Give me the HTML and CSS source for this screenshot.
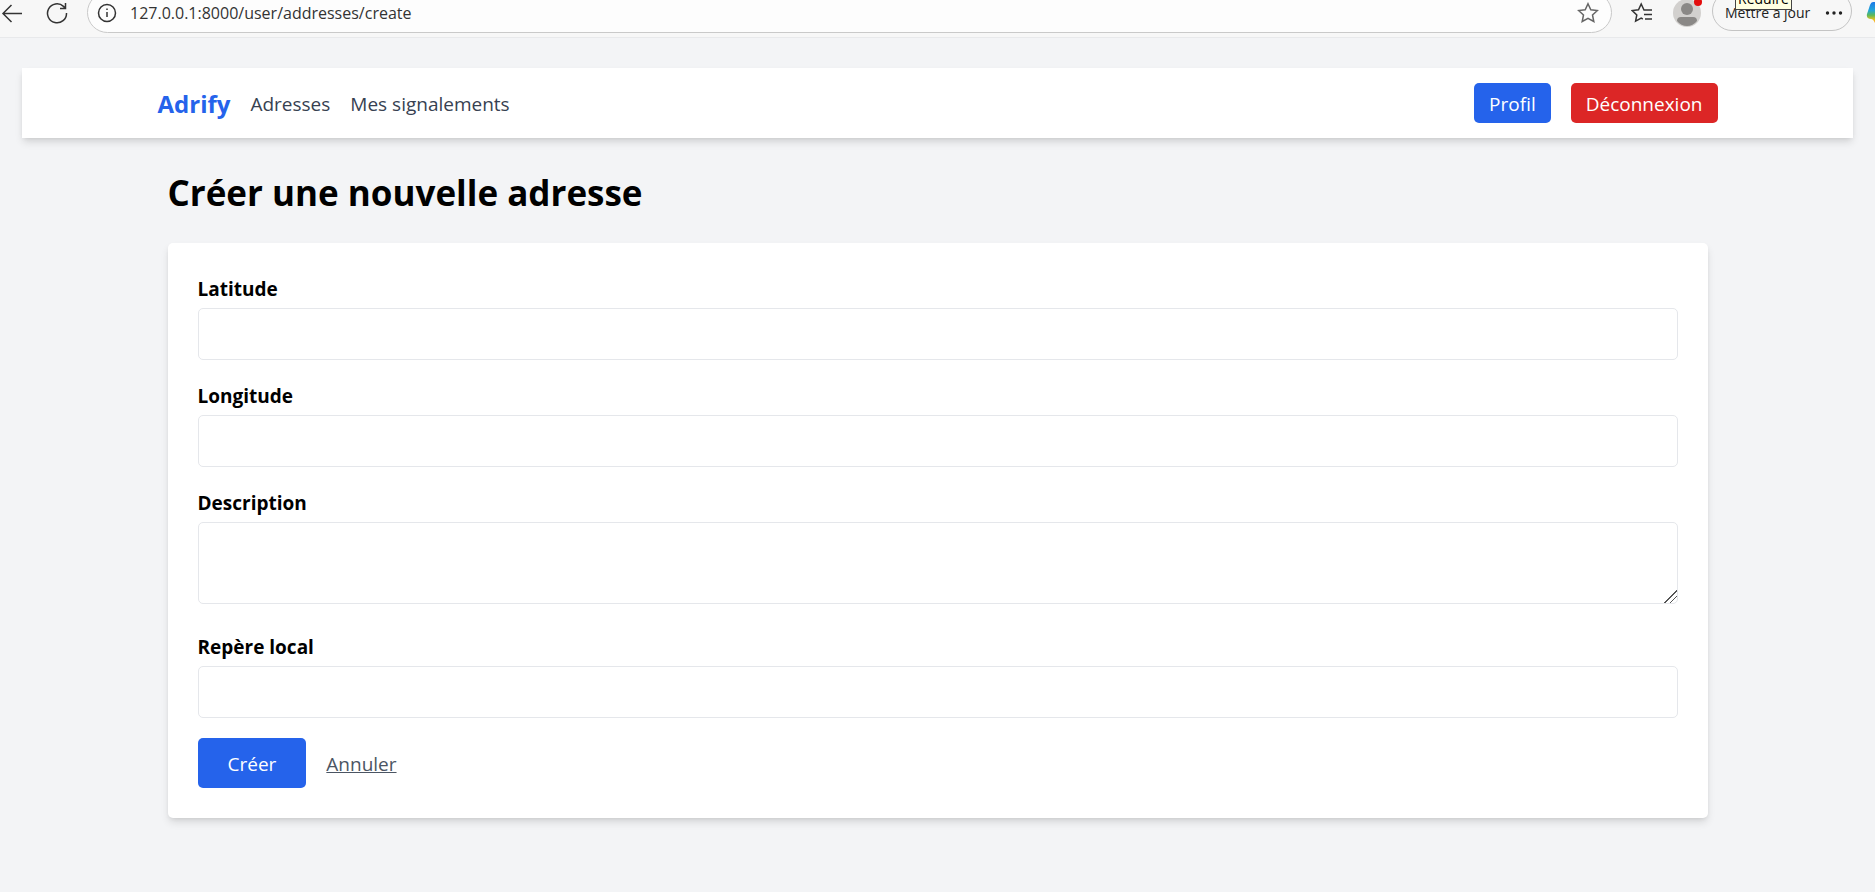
FILE: index.html
```html
<!DOCTYPE html>
<html lang="fr">
<head>
<meta charset="utf-8">
<title>Adrify</title>
<link rel="stylesheet" href="styles.css">
</head>
<body>
<div class="toolbar">
  <button class="tool back" type="button" aria-label="Retour">
    <svg width="22" height="22" viewBox="0 0 22 22"><path d="M21 11.500H2M10.500 3L2 11.500l8.500 8.500"/></svg>
  </button>
  <button class="tool reload" type="button" aria-label="Actualiser">
    <svg width="22" height="22" viewBox="0 0 22 22"><path d="M20.500 11a9.500 9.500 0 1 1-3-6.600l2 2M19.500 1v5.500h-5.500"/></svg>
  </button>
  <div class="address-bar">
    <svg class="info" width="20" height="20" viewBox="0 0 20 20"><circle cx="10" cy="10" r="8.500"/><path d="M10 9v5"/><path d="M10 5.500v1.500"/></svg>
    <input class="url" type="text" aria-label="Adresse" value="127.0.0.1:8000/user/addresses/create">
    <button class="tool" type="button" aria-label="Ajouter aux favoris">
      <svg class="grey" width="22" height="22" viewBox="0 0 22 22"><path d="M11 1.700l2.800 6 6.600.8-4.900 4.500 1.300 6.500-5.800-3.200-5.800 3.200 1.300-6.500-4.900-4.500 6.600-.8z"/></svg>
    </button>
  </div>
  <button class="tool favorites" type="button" aria-label="Favoris">
    <svg width="22" height="22" viewBox="0 0 22 22"><path d="M21 8h-8L10.200 2 7.500 7.700l-6.300.8 4.600 4.500-1.200 6.200 5.600-3 1.600.8M13 12.500h8M14 17h7"/></svg>
  </button>
  <button class="avatar" type="button" aria-label="Profil du navigateur">
    <svg width="28" height="28" viewBox="0 0 28 28"><circle cx="14" cy="14" r="14" fill="#d2d0ce"/><circle cx="14" cy="10" r="6" fill="#8a8886"/><path d="M4 22q0-4 4-4h12q4 0 4 4-4 5-10 5T4 22z" fill="#8a8886"/></svg>
    <span class="badge"></span>
  </button>
  <button class="update" type="button">
    <span>Mettre à jour</span>
    <svg width="18" height="6" viewBox="0 0 18 6"><circle cx="2.500" cy="3" r="1.700"/><circle cx="9" cy="3" r="1.700"/><circle cx="15.500" cy="3" r="1.700"/></svg>
    <span class="tooltip">Réduire</span>
  </button>
  <svg class="copilot" width="28" height="28" viewBox="0 0 28 28">
    <defs><linearGradient id="cp" x1="0" y1="0" x2="0" y2="1"><stop offset="0" stop-color="#1b78e8"/><stop offset=".35" stop-color="#22a6d8"/><stop offset=".55" stop-color="#5cba5a"/><stop offset=".75" stop-color="#f2c21c"/><stop offset="1" stop-color="#f4662d"/></linearGradient></defs>
    <path d="M7 2h15l-6 24H10q-2-7-5-7-5 0-4-5l3-9q1-3 3-3z" fill="url(#cp)"/>
  </svg>
</div>
<div class="page">
  <nav class="navbar">
    <div class="navbar-inner">
      <div class="links">
        <a class="brand" href="#">Adrify</a>
        <a class="link" href="#">Adresses</a>
        <a class="link" href="#">Mes signalements</a>
      </div>
      <div class="links">
        <a class="btn" href="#">Profil</a>
        <button class="btn danger" type="button">Déconnexion</button>
      </div>
    </div>
  </nav>
  <main class="content">
    <h1 class="title">Créer une nouvelle adresse</h1>
    <form class="card">
      <div class="field">
        <label for="latitude">Latitude</label>
        <input class="control" id="latitude" type="text">
      </div>
      <div class="field">
        <label for="longitude">Longitude</label>
        <input class="control" id="longitude" type="text">
      </div>
      <div class="field">
        <label for="description">Description</label>
        <textarea class="control area" id="description" rows="2"></textarea>
      </div>
      <div class="field">
        <label for="repere">Repère local</label>
        <input class="control" id="repere" type="text">
      </div>
      <div class="actions">
        <button class="btn submit" type="submit">Créer</button>
        <a class="cancel" href="#">Annuler</a>
      </div>
    </form>
  </main>
</div>
</body>
</html>
```
FILE: styles.css
```css
* { box-sizing: border-box; }
body {
  margin: 0;
  background: #f3f4f6;
  color: #000;
  font: 19px/30px "Open Sans", "Noto Sans", sans-serif;
}
button, input, textarea { font: inherit; color: inherit; }
button { border: 0; background: none; padding: 0; cursor: pointer; }
a { color: inherit; text-decoration: none; }

.toolbar {
  display: flex;
  align-items: flex-end;
  height: 38px;
  padding-bottom: 4px;
  overflow: hidden;
  background: #f7f7f7;
  border-bottom: 1px solid #e8e9eb;
}
.toolbar svg { display: block; flex: none; fill: none; stroke: #333; stroke-width: 1.5; }
.toolbar .grey { stroke: #666; }
.tool { display: grid; place-items: center; flex: none; width: 22px; height: 40px; }
.back { margin-left: 1px; }
.reload { margin: 0 19px 0 23px; }
.address-bar {
  display: flex;
  align-items: center;
  flex: 1;
  height: 41px;
  padding: 0 12px 0 9px;
  gap: 13px;
  background: #fdfdfd;
  border: 1px solid #c9c9c9;
  border-radius: 21px;
}
.url {
  flex: 1;
  min-width: 0;
  padding: 0;
  border: 0;
  outline: 0;
  background: none;
  font-size: 16px;
  color: #333;
}
.favorites { margin-left: 19px; }
.avatar { position: relative; display: grid; place-items: center; height: 40px; margin: 0 11px 0 20px; }
.avatar svg { stroke: none; }
.badge {
  position: absolute;
  top: 5px;
  right: -1px;
  width: 8px;
  height: 8px;
  border-radius: 50%;
  background: #e30d0d;
}
.update {
  position: relative;
  display: flex;
  align-items: center;
  justify-content: space-between;
  flex: none;
  width: 140px;
  height: 40px;
  margin-bottom: 2px;
  padding: 4px 8px 0 12px;
  border: 1px solid #c4c4c4;
  border-radius: 20px;
  font-size: 14px;
  color: #222;
}
.toolbar .update svg { fill: #222; stroke: none; }
.tooltip {
  position: absolute;
  bottom: 20px;
  left: 22px;
  padding: 0 2px 1px;
  border: 1px solid #444;
  background: #ffffe1;
  color: #000;
  font-size: 14px;
  line-height: 19px;
}
.copilot { margin: 0 -19px 5px 14px; }
.toolbar .copilot { stroke: none; }

.page { padding: 30px 22px; }
.navbar {
  padding: 15px 20px;
  background: #fff;
  box-shadow: 0 5px 8px -1px rgba(0,0,0,.12), 0 2px 5px -2px rgba(0,0,0,.1);
}
.navbar-inner {
  display: flex;
  align-items: center;
  justify-content: space-between;
  max-width: 1560px;
  margin: 0 auto;
}
.links { display: flex; align-items: center; gap: 20px; }
.brand { padding-top: 2px; font-size: 24px; font-weight: 700; color: #2563eb; }
.link { padding-top: 2px; color: #374151; }
.btn {
  padding: 6px 15px 4px;
  border-radius: 5px;
  background: #2563eb;
  color: #fff;
}
.danger { background: #dc2626; }

.content { max-width: 1540px; margin: 30px auto 0; }
.title { margin: 0; padding: 2px 0 28px; font-size: 35px; line-height: 45px; font-weight: 700; }
.card {
  display: grid;
  gap: 20px;
  padding: 30px;
  border-radius: 5px;
  background: #fff;
  box-shadow: 0 5px 8px -1px rgba(0,0,0,.12), 0 2px 5px -2px rgba(0,0,0,.1);
}
.field { display: grid; gap: 4px; }
.field label { padding-top: 1px; font-weight: 700; }
.control {
  width: 100%;
  height: 52px;
  padding: 10px;
  border: 1px solid #e5e7eb;
  border-radius: 5px;
  background: #fff;
}
.area { display: block; height: 82px; margin-bottom: 7px; resize: vertical; }
.area::-webkit-resizer {
  background: linear-gradient(135deg, transparent 56%, #555 56% 62%, transparent 62% 74%, #555 74% 80%, transparent 80%);
}
.actions { display: flex; align-items: center; gap: 20px; }
.submit { padding: 11px 30px 9px; }
.cancel { padding-top: 2px; color: #4b5563; text-decoration: underline; }
```
